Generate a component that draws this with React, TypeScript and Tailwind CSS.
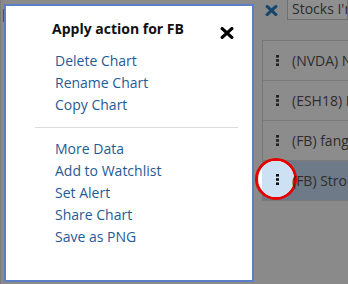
const rows = [
  "(NVDA) NVIDIA Corporation",
  "(ESH18) E-mini S&P 500",
  "(FB) fang stocks",
  "(FB) Strong Buy Signal",
];

const primaryActions = ["Delete Chart", "Rename Chart", "Copy Chart"];
const secondaryActions = [
  "More Data",
  "Add to Watchlist",
  "Set Alert",
  "Share Chart",
  "Save as PNG",
];

const Dots = ({ color = "#1f1f1f" }: { color?: string }) => (
  <svg width="3" height="11" viewBox="0 0 3 11" className="shrink-0">
    <rect x="0" y="0" width="3" height="2.6" fill={color} />
    <rect x="0" y="4.2" width="3" height="2.6" fill={color} />
    <rect x="0" y="8.4" width="3" height="2.6" fill={color} />
  </svg>
);

const Times = ({ color, w, h }: { color: string; w: number; h: number }) => (
  <svg width={w} height={h} viewBox="0 0 14 12" className="shrink-0">
    <path
      d="M2.2 1.6 L11.8 10.4 M11.8 1.6 L2.2 10.4"
      stroke={color}
      strokeWidth="3.3"
      strokeLinecap="round"
    />
  </svg>
);

const App = () => {
  return (
    <div className="relative w-[348px] h-[284px] overflow-hidden bg-[#8a8a8a] font-['Open_Sans',sans-serif]">
      <div className="flex h-full">
        {/* chart area behind the overlay */}
        <div className="relative w-[262px] h-full border-l border-[#7c7c7c]">
          <span className="block pl-[1px] pt-[6px] text-[14px] leading-[16px] text-[#3e3e3e]">
            [
          </span>
        </div>

        {/* watchlist panel */}
        <div className="flex-1 flex flex-col min-w-0">
          <div className="flex items-start h-[40px]">
            <div className="ml-[2px] mt-[5px]">
              <Times color="#17456c" w={15} h={11} />
            </div>
            <div className="ml-[8px] -mt-[2px] h-[22px] flex-1 border border-[#6f6f6f] bg-[#8f8f8f] pl-[4px] text-[14px] leading-[20px] text-[#2c2c2c] whitespace-nowrap overflow-hidden">
              Stocks I'm watching
            </div>
          </div>
          <div className="border-l border-t border-[#777777]">
            {rows.map((row, i) => (
              <div
                key={row}
                className={`flex items-center h-[40px] border-b border-[#7a7a7a] pl-[13px] ${
                  i === 3 ? "bg-[#6e7a87]" : "bg-[#8c8c8c]"
                }`}
              >
                <Dots color={i === 3 ? "#111111" : "#222222"} />
                <span className="relative z-10 ml-[13px] text-[14px] leading-[20px] text-[#2d2d2d] whitespace-nowrap">
                  {row}
                </span>
              </div>
            ))}
          </div>
        </div>
      </div>

      {/* highlight ring around the row menu button */}
      <div className="absolute left-[255px] top-[158px] w-[42px] h-[42px] rounded-full border-[3px] border-[#e60000] bg-white overflow-hidden">
        <div className="absolute left-[4px] top-0 w-[40px] h-full bg-[#cde1f5]" />
        <div className="absolute left-[18px] top-[13px]">
          <Dots color="#111111" />
        </div>
      </div>

      {/* action dialog */}
      <div className="absolute left-[4px] top-[4px] w-[250px] h-[278px] bg-white border-2 border-[#5b7ec8]">
        <div className="flex items-start justify-between pl-[46px] pr-[18px] pt-[12px]">
          <h3 className="text-[14px] leading-[22px] font-bold text-[#111111]">
            Apply action for FB
          </h3>
          <div className="mt-[9px]">
            <Times color="#000000" w={14} h={12} />
          </div>
        </div>

        <ul className="mt-[10px] pl-[49px] text-[14px] leading-[22px] text-[#1f5b95]">
          {primaryActions.map((a) => (
            <li key={a}>{a}</li>
          ))}
        </ul>

        <div className="mt-[11px] ml-[29px] mr-[14px] h-px bg-[#dcdcdc]" />

        <ul className="mt-[10px] pl-[49px] text-[14px] leading-[22px] text-[#1f5b95]">
          {secondaryActions.map((a) => (
            <li key={a}>{a}</li>
          ))}
        </ul>
      </div>
    </div>
  );
};

export default App;
